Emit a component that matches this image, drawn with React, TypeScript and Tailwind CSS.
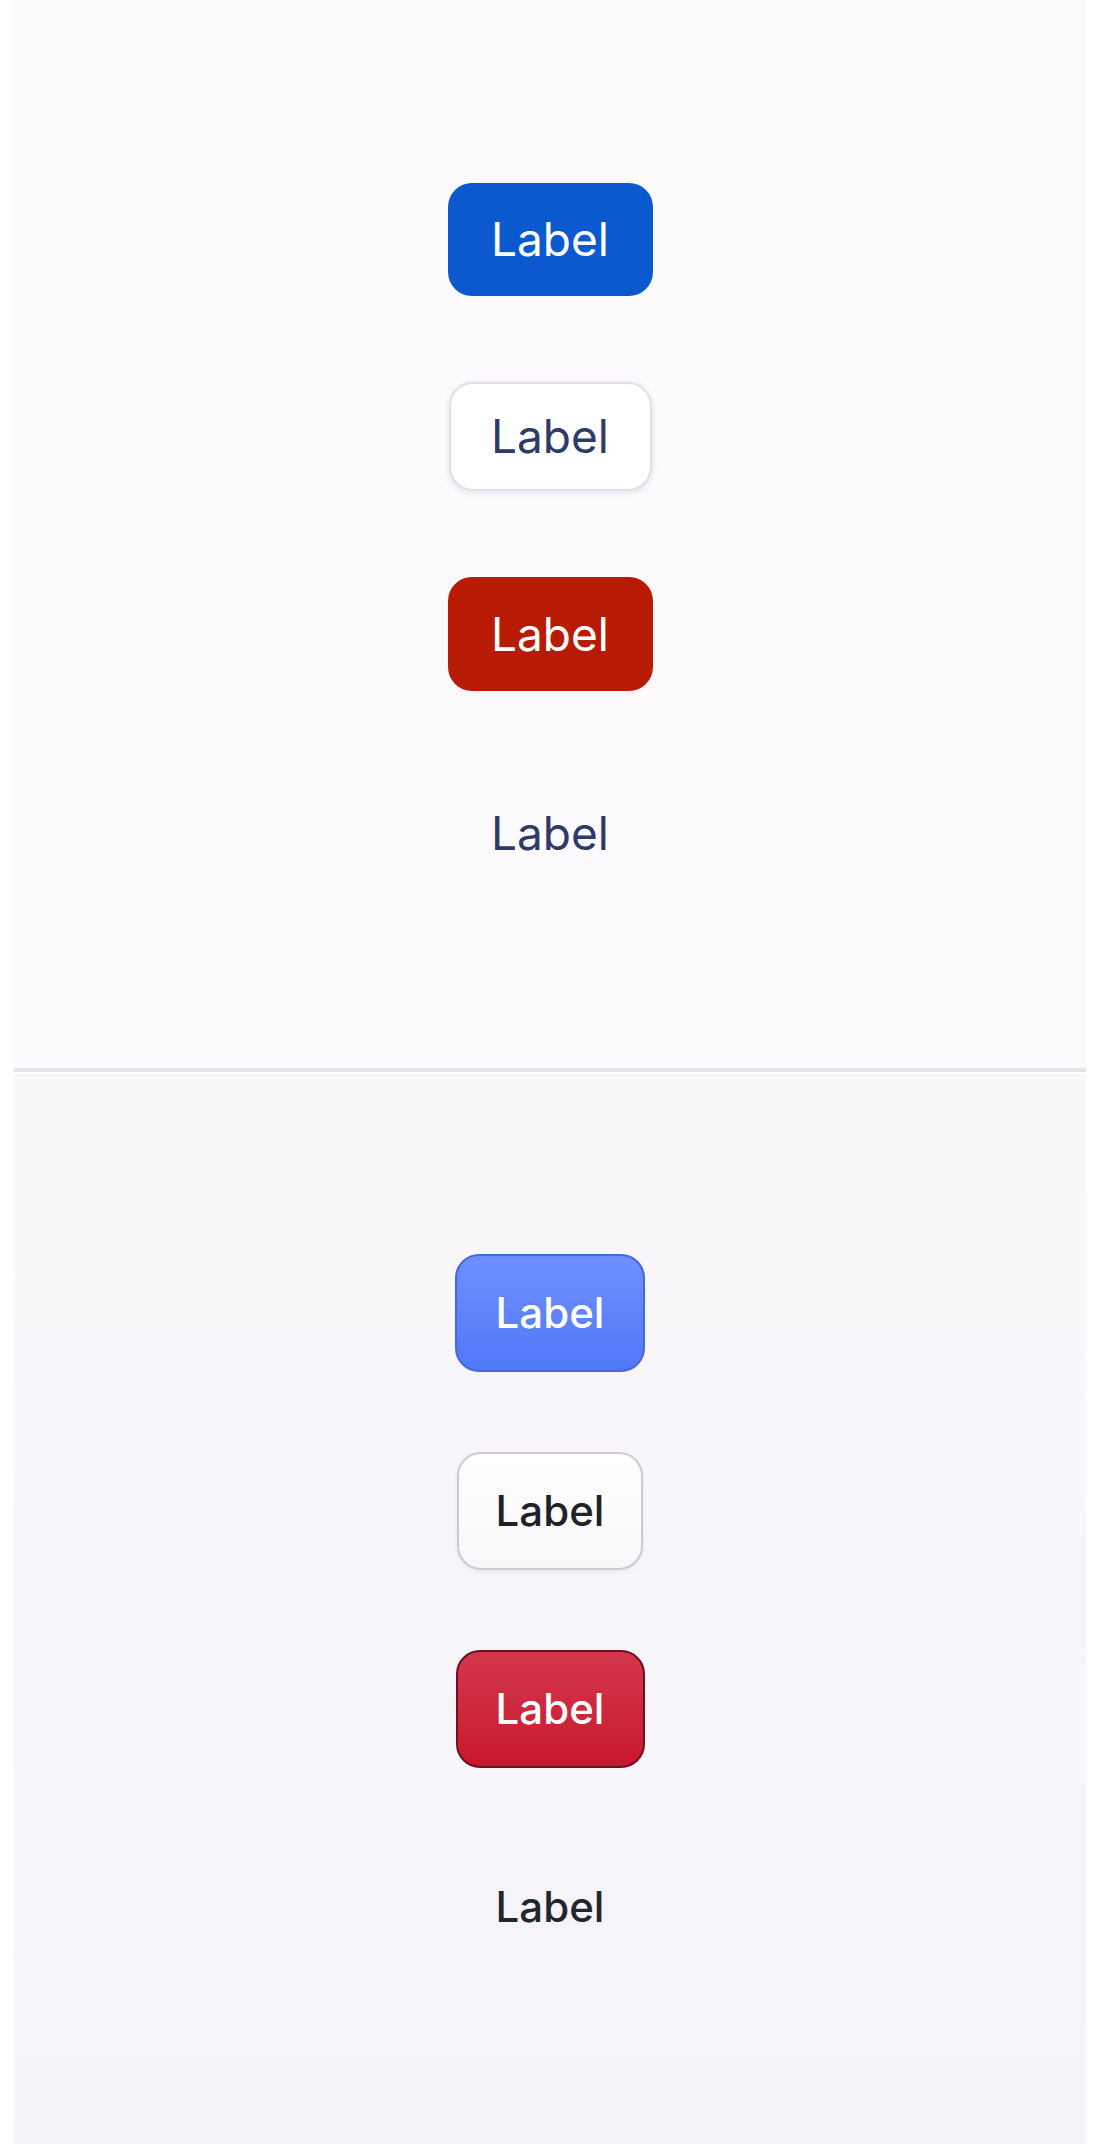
import * as React from "react"

const topFont = { fontFamily: "Inter, 'Noto Sans', sans-serif" }

function LightPanel() {
  return (
    <div
      className="h-[1068px] pt-[4px] bg-[#fcfafd] flex flex-col items-center justify-center gap-[86px]"
      style={topFont}
    >
      <button className="h-[113px] w-[205px] rounded-[24px] bg-[#0b59cf] text-white text-[46px] leading-none">
        Label
      </button>
      <button className="h-[109px] w-[203px] rounded-[24px] bg-white border-2 border-[#e1dfe7] shadow-[0_2px_6px_rgba(40,30,70,0.10)] text-[#2f3a69] text-[46px] leading-none">
        Label
      </button>
      <button className="h-[114px] w-[205px] rounded-[24px] bg-[#b81b04] text-white text-[46px] leading-none">
        Label
      </button>
      <button className="h-[113px] w-[205px] rounded-[24px] text-[#2f3a69] text-[46px] leading-none">
        Label
      </button>
    </div>
  )
}

function ClassicPanel() {
  return (
    <div
      className="h-[1068px] bg-gradient-to-b from-[#f9f7fa] to-[#f6f4f8] flex flex-col items-center justify-center gap-[80px]"
      style={topFont}
    >
      <button className="h-[118px] w-[190px] rounded-[24px] border-2 border-[#4667e0] bg-gradient-to-b from-[#6f8fff] to-[#5079f6] text-white text-[42px] font-medium leading-none">
        Label
      </button>
      <button className="h-[118px] w-[186px] rounded-[24px] border-2 border-[#cdcbd1] bg-gradient-to-b from-white to-[#f8f7fa] shadow-[0_2px_4px_rgba(0,0,0,0.06)] text-[#1f2328] text-[42px] font-medium leading-none">
        Label
      </button>
      <button className="h-[118px] w-[189px] rounded-[24px] border-2 border-[#6e1020] bg-gradient-to-b from-[#d3364c] to-[#c8162e] text-white text-[42px] font-medium leading-none">
        Label
      </button>
      <button className="h-[118px] w-[190px] rounded-[24px] text-[#23262d] text-[42px] font-medium leading-none">
        Label
      </button>
    </div>
  )
}

export default function App() {
  return (
    <div className="min-h-[2144px] bg-white px-[14px]">
      <LightPanel />
      <div className="h-[4px] bg-[#e6e4e9]" />
      <div className="h-[3px] bg-[#fdfcfe]" />
      <div className="h-[1px] bg-[#f1eef4]" />
      <ClassicPanel />
    </div>
  )
}
